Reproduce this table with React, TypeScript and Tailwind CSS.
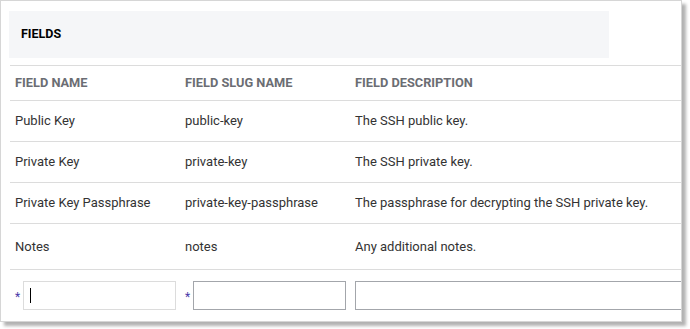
const rows = [
  { name: "Public Key", slug: "public-key", desc: "The SSH public key." },
  { name: "Private Key", slug: "private-key", desc: "The SSH private key." },
  { name: "Private Key Passphrase", slug: "private-key-passphrase", desc: "The passphrase for decrypting the SSH private key." },
  { name: "Notes", slug: "notes", desc: "Any additional notes.", tall: true },
]

function Star() {
  return <span className="w-[6px] text-[12px] leading-none text-[#4a3aa8] pt-[3px]">*</span>
}

export default function App() {
  return (
    <div className="w-[690px] h-[329px] bg-white font-['Roboto',sans-serif]">
      <div className="w-[682px] h-[322px] border border-[#d6d6d6] shadow-[4px_4px_3px_rgba(0,0,0,0.3)] overflow-hidden bg-white">
        <div className="pl-[8px] pt-[10px]">
          <div className="w-[600px] h-[47px] bg-[#f5f6f8] flex items-center pl-[12px]">
            <span className="text-[12.5px] font-bold text-black">FIELDS</span>
          </div>
        </div>
        <div className="ml-[9px] mt-[7px] w-[700px] text-[13px] text-[#333]">
          <div className="flex h-[36px] items-center border-y border-[#dcdcdc] text-[12.8px] font-bold text-[#6b6d73] uppercase">
            <div className="w-[170px] pl-[5px]">Field Name</div>
            <div className="w-[170px] pl-[5px]">Field Slug Name</div>
            <div className="pl-[5px]">Field Description</div>
          </div>
          {rows.map((r) => (
            <div
              key={r.slug}
              className={`flex items-center border-b border-[#dcdcdc] ${r.tall ? "h-[46px]" : "h-[41px]"}`}
            >
              <div className="w-[170px] pl-[5px]">{r.name}</div>
              <div className="w-[170px] pl-[5px]">{r.slug}</div>
              <div className="pl-[5px]">{r.desc}</div>
            </div>
          ))}
          <div className="flex items-center pt-[11px]">
            <div className="w-[170px] flex items-center gap-[2px] pl-[5px]">
              <Star />
              <div className="w-[153px] h-[29px] border border-[#dcdcdc] flex items-center pl-[6px]">
                <div className="w-px h-[15px] bg-black" />
              </div>
            </div>
            <div className="w-[170px] flex items-center gap-[2px] pl-[5px]">
              <Star />
              <div className="w-[153px] h-[29px] border border-[#a3a6ab]" />
            </div>
            <div className="pl-[5px]">
              <div className="w-[340px] h-[29px] border border-[#a3a6ab]" />
            </div>
          </div>
        </div>
      </div>
    </div>
  )
}
